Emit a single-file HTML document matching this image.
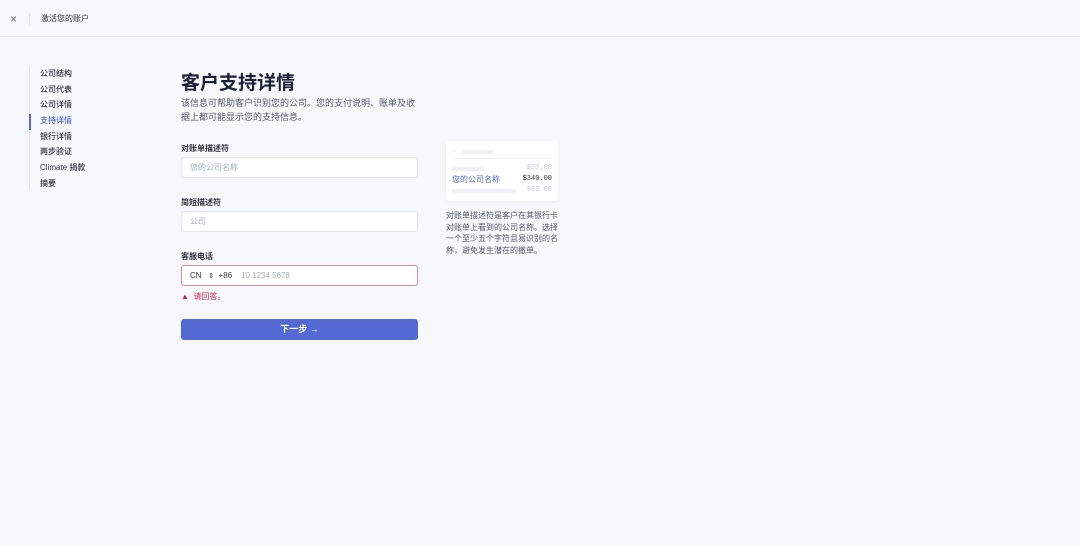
<!DOCTYPE html>
<html><head><meta charset="utf-8"><style>
*{margin:0;padding:0;box-sizing:border-box}
body{width:1080px;height:545px;background:#f6f8fb;font-family:"Liberation Sans","Noto Sans CJK SC",sans-serif;color:#30313d;position:relative;overflow:hidden}
.top{position:absolute;left:0;top:0;width:1080px;height:37px;border-bottom:1px solid #ebeef1;background:#f6f8fb}
.abs{position:absolute}
.nav{position:absolute;left:29px;top:67px;border-left:1px solid #e0e3e8;height:122px}
.nav div{font-size:8px;height:15.7px;line-height:13px;padding-left:10px;color:#30313d;font-weight:500}
.nav .act{color:#5469d4;border-left:2px solid #5469d4;margin-left:-1.5px;padding-left:9.5px}
.lbl{position:absolute;left:181px;font-size:8px;font-weight:bold;color:#30313d}
.inp{position:absolute;left:181px;width:237px;height:21px;background:#fff;border:1px solid #e3e6ea;border-radius:3px;font-size:8px;color:#a3acb9;line-height:19px;padding-left:8px}
</style></head><body>
<div class="top">
<div class="abs" style="left:10px;top:12px;font-size:12px;color:#666;font-weight:300">×</div>
<div class="abs" style="left:29px;top:13px;width:1px;height:12px;background:#e0e3e8"></div>
<div class="abs" style="left:41px;top:13px;font-size:8px;color:#30313d">激活您的账户</div>
</div>
<div class="nav">
<div>公司结构</div><div>公司代表</div><div>公司详情</div><div class="act">支持详情</div><div>银行详情</div><div>两步验证</div><div>Climate 捐款</div><div>摘要</div>
</div>
<div class="abs" style="left:181px;top:68px;font-size:19px;font-weight:bold;color:#1a1f36">客户支持详情</div>
<div class="abs" style="left:181px;top:96px;width:240px;font-size:9px;line-height:14px;color:#545969">该信息可帮助客户识别您的公司。您的支付说明、账单及收据上都可能显示您的支持信息。</div>
<div class="lbl" style="top:143px">对账单描述符</div>
<div class="inp" style="top:157px">您的公司名称</div>
<div class="lbl" style="top:197px">简短描述符</div>
<div class="inp" style="top:211px">公司</div>
<div class="lbl" style="top:251px">客服电话</div>
<div class="inp" style="top:265px;border-color:#e48a9b;color:#30313d">CN&nbsp;&nbsp;&nbsp;<span style="font-size:7px">⇕</span>&nbsp;&nbsp;+86&nbsp;&nbsp;&nbsp;&nbsp;<span style="color:#a3acb9">10 1234 5678</span></div>
<div class="abs" style="left:181px;top:291px;font-size:8px;color:#df1b41">▲&nbsp;&nbsp;请回答。</div>
<div class="abs" style="left:181px;top:319px;width:237px;height:21px;background:#5469d4;border-radius:3px;color:#fff;font-size:9px;font-weight:bold;text-align:center;line-height:21px">下一步 →</div>
<div class="abs" style="left:446px;top:141px;width:112px;height:60px;background:#fff;border-radius:3px;box-shadow:0 1px 3px rgba(0,0,0,.06)">
<div class="abs" style="left:6px;top:6px;font-size:7px;color:#d0d5dc">⌂</div>
<div class="abs" style="left:17px;top:9px;width:30px;height:4px;background:#eef0f4"></div>
<div class="abs" style="left:6px;top:17px;width:100px;height:1px;background:#eef0f4"></div>
<div class="abs" style="left:6px;top:26px;width:32px;height:4px;background:#eef0f4"></div>
<div class="abs" style="right:6px;top:23px;font-size:7px;color:#c4cad3;font-family:'Liberation Mono',monospace">$20.00</div>
<div class="abs" style="left:6px;top:33px;font-size:8px;color:#5469d4">您的公司名称</div>
<div class="abs" style="right:6px;top:34px;font-size:7px;color:#30313d;font-family:'Liberation Mono',monospace">$340.00</div>
<div class="abs" style="left:6px;top:48px;width:64px;height:4px;background:#eef0f4"></div>
<div class="abs" style="right:6px;top:45px;font-size:7px;color:#c4cad3;font-family:'Liberation Mono',monospace">$63.00</div>
</div>
<div class="abs" style="left:446px;top:210px;width:115px;font-size:8px;line-height:11.5px;color:#545969">对账单描述符是客户在其银行卡对账单上看到的公司名称。选择一个至少五个字符且易识别的名称，避免发生潜在的撤单。</div>
</body></html>
